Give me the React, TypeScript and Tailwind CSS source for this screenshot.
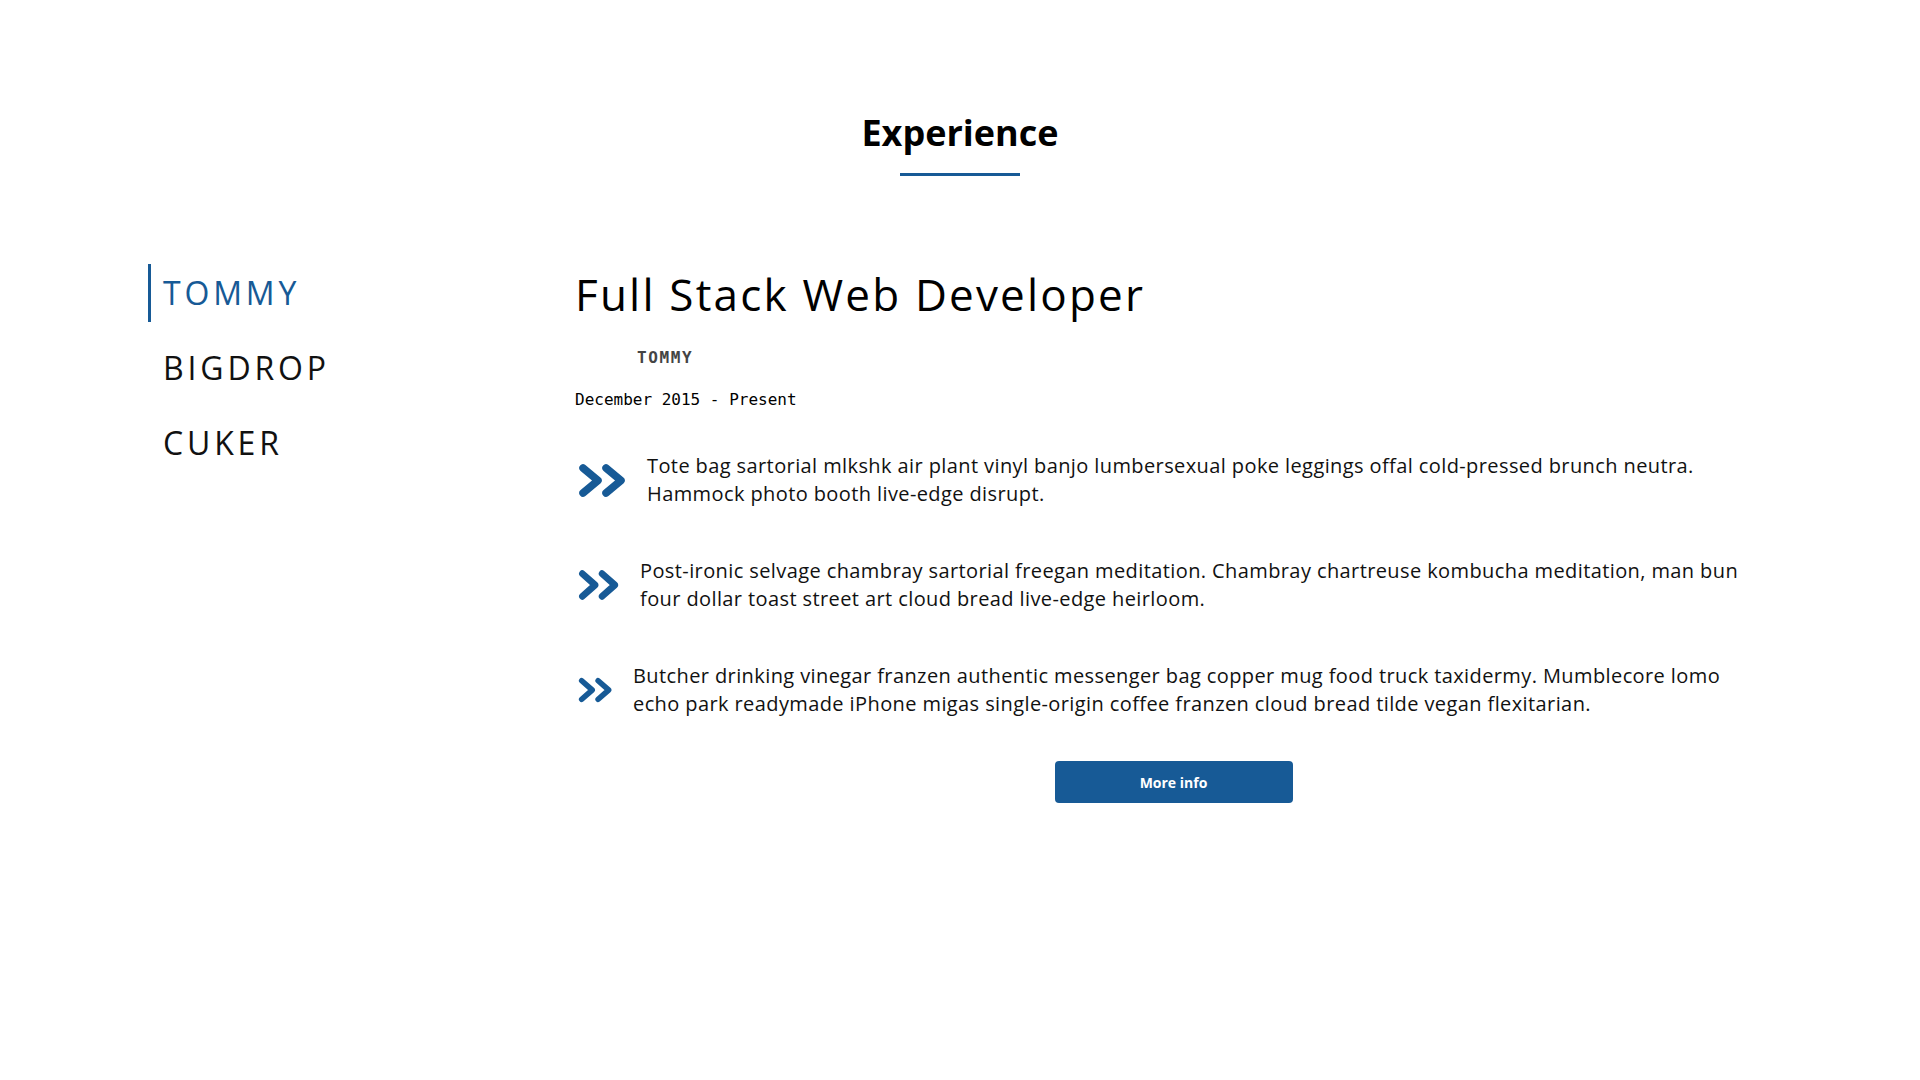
import { useState } from 'react';

const jobs = [
  {
    company: 'TOMMY',
    title: 'Full Stack Web Developer',
    dates: 'December 2015 - Present',
  },
  {
    company: 'BIGDROP',
    title: 'Front End Developer',
    dates: 'March 2013 - November 2015',
  },
  {
    company: 'CUKER',
    title: 'Junior Web Developer',
    dates: 'June 2011 - February 2013',
  },
];

const points = [
  {
    text: 'Tote bag sartorial mlkshk air plant vinyl banjo lumbersexual poke leggings offal cold-pressed brunch neutra. Hammock photo booth live-edge disrupt.',
    icon: 'w-[49px] h-[35px]',
  },
  {
    text: 'Post-ironic selvage chambray sartorial freegan meditation. Chambray chartreuse kombucha meditation, man bun four dollar toast street art cloud bread live-edge heirloom.',
    icon: 'w-[42px] h-[32px]',
  },
  {
    text: 'Butcher drinking vinegar franzen authentic messenger bag copper mug food truck taxidermy. Mumblecore lomo echo park readymade iPhone migas single-origin coffee franzen cloud bread tilde vegan flexitarian.',
    icon: 'w-[35px] h-[26px]',
  },
];

const DoubleChevron = ({ className }: { className: string }) => (
  <svg viewBox="0 0 49 35" preserveAspectRatio="none" className={className}>
    <g fill="none" stroke="#175a96" strokeWidth="7.5" strokeLinecap="round" strokeLinejoin="round">
      <polyline points="5,5 20,17.5 5,30" />
      <polyline points="28,5 43,17.5 28,30" />
    </g>
  </svg>
);

const Experience = () => {
  const [active, setActive] = useState(0);
  const job = jobs[active];

  return (
    <section className="min-h-screen bg-white font-['Open_Sans',sans-serif] text-[#111]">
      <div className="pt-[111px] flex flex-col items-center">
        <h2 className="text-[36px] leading-[44px] font-bold text-black">Experience</h2>
        <div className="mt-[18px] w-[120px] h-[3px] bg-[#175a96]"></div>
      </div>

      <div className="w-[1624px] mx-auto mt-[88px] flex">
        <div className="w-[427px] shrink-0 flex flex-col gap-[17px]">
          {jobs.map((j, idx) => (
            <button
              key={j.company}
              onClick={() => setActive(idx)}
              className={
                idx === active
                  ? 'h-[58px] w-fit border-l-[3px] border-[#175a96] pl-[12px] text-[32px] leading-[58px] tracking-[0.12em] text-[#175a96] text-left'
                  : 'h-[58px] w-fit border-l-[3px] border-transparent pl-[12px] text-[32px] leading-[58px] tracking-[0.12em] text-[#111] text-left'
              }
            >
              {j.company}
            </button>
          ))}
        </div>

        <div className="flex-1">
          <h3 className="text-[44px] leading-[60px] font-medium tracking-[0.05em] text-black">{job.title}</h3>
          <div className="mt-[22px] ml-[62px] font-['DejaVu_Sans_Mono',monospace] text-[16px] leading-[24px] font-bold tracking-[0.1em] text-[#444]">
            {job.company}
          </div>
          <div className="mt-[18px] font-['DejaVu_Sans_Mono',monospace] text-[16px] leading-[24px] text-black">
            {job.dates}
          </div>

          <div className="mt-[40px] flex flex-col gap-[49px]">
            {points.map((p, idx) => (
              <div key={idx} className="flex items-center gap-[20px]">
                <div className="shrink-0 pl-[3px]">
                  <DoubleChevron className={p.icon} />
                </div>
                <p className="text-[20px] leading-[28px] tracking-[0.02em]">{p.text}</p>
              </div>
            ))}
          </div>

          <div className="mt-[43px] flex justify-center">
            <button className="w-[238px] h-[42px] rounded-[4px] bg-[#175a96] text-white text-[14px] font-bold">
              More info
            </button>
          </div>
        </div>
      </div>
    </section>
  );
};

export default function App() {
  return <Experience />;
}
